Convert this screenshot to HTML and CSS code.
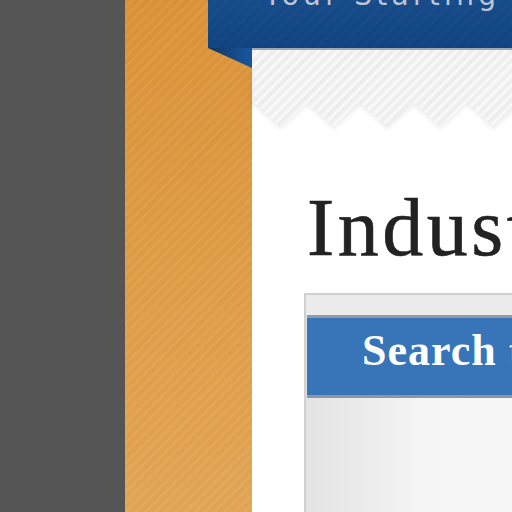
FILE: index.html
```html
<!DOCTYPE html>
<html lang="en">
<head>
<meta charset="utf-8">
<title>Industry News</title>
<link rel="stylesheet" href="styles.css">
</head>
<body>
<div class="page">
  <div class="rail"></div>
  <div class="side"></div>
  <div class="main">
    <header class="banner"><span class="tagline">Your Starting Point</span></header>
    <div class="zig-wrap">
      <div class="fold"></div>
      <div class="zig-shadow"><div class="zig"></div></div>
    </div>
    <h1 class="title">Industry News</h1>
    <div class="box">
      <div class="box-top"></div>
      <div class="box-head">Search the Site</div>
      <div class="box-body"></div>
    </div>
  </div>
</div>
</body>
</html>
```

FILE: styles.css
```css
html, body {
  margin: 0;
  padding: 0;
  overflow: hidden;
}

.page {
  display: flex;
  width: 512px;
  height: 512px;
  overflow: hidden;
  background: #ffffff;
}

.rail {
  flex: 0 0 125px;
  background: #555555;
}

.side {
  flex: 0 0 127px;
  background:
    repeating-linear-gradient(135deg, rgba(255,255,255,0) 0 4px, rgba(255,255,255,0.06) 4px 7px),
    linear-gradient(#da9136, #e1a453);
}

.main {
  flex: 1 0 260px;
  min-width: 0;
  background: #ffffff;
}

.banner {
  display: block;
  height: 48px;
  margin-left: -44px;
  overflow: hidden;
  white-space: nowrap;
  background:
    repeating-linear-gradient(135deg, rgba(255,255,255,0) 0 5px, rgba(255,255,255,0.015) 5px 8px),
    linear-gradient(#174b89, #10437f);
}

.tagline {
  display: block;
  margin-top: -18px;
  padding-left: 56px;
  font-family: "DejaVu Sans", Verdana, sans-serif;
  font-size: 28px;
  line-height: 28px;
  letter-spacing: 4.3px;
  color: #bcc6d6;
}

.zig-wrap {
  position: relative;
  height: 80px;
}

.fold {
  position: absolute;
  left: -44px;
  top: 0;
  width: 44px;
  height: 20px;
  background: linear-gradient(to right, #123560, #1a57a0);
  clip-path: polygon(0 0, 100% 0, 100% 100%);
}

.zig-shadow {
  filter: drop-shadow(0 2px 2px rgba(0,0,0,0.08));
}

.zig {
  height: 78px;
  border-top: 2px solid #9ea8b6;
  background:
    repeating-linear-gradient(135deg, #eeeeee 0 4px, #f8f8f8 4px 7px);
  clip-path: polygon(0 0, 100% 0, 260px 62px, 241.6px 79px, 215px 55px, 188.4px 79px, 161.75px 55px, 135.1px 79px, 108.5px 55px, 81.9px 79px, 55.25px 55px, 28.6px 79px, 2px 55px, 0 57px);
}

.title {
  margin: 59px 0 0 55px;
  font-family: "Liberation Serif", Georgia, serif;
  font-weight: normal;
  font-size: 82px;
  line-height: 82px;
  letter-spacing: 3.5px;
  color: #222222;
  -webkit-text-stroke: 0.6px #222222;
  white-space: nowrap;
}

.box {
  margin: 24px 0 0 52px;
  width: 400px;
  height: 260px;
  border: 2px solid #d0d0d0;
  background: linear-gradient(to right, #e3e3e3, #f5f5f5 120px, #f9f9f9);
}

.box-top {
  height: 20px;
  background: #ebebeb;
}

.box-head {
  margin-left: 1px;
  padding: 11px 0 22px 55px;
  border-top: 3px solid #8d9cad;
  border-bottom: 3px solid #8c97a3;
  background: #3874b8;
  font-family: "Liberation Serif", Georgia, serif;
  font-weight: bold;
  font-size: 44px;
  line-height: 44px;
  letter-spacing: 1px;
  color: #ffffff;
  white-space: nowrap;
}

.box-body {
  height: 150px;
}
```
